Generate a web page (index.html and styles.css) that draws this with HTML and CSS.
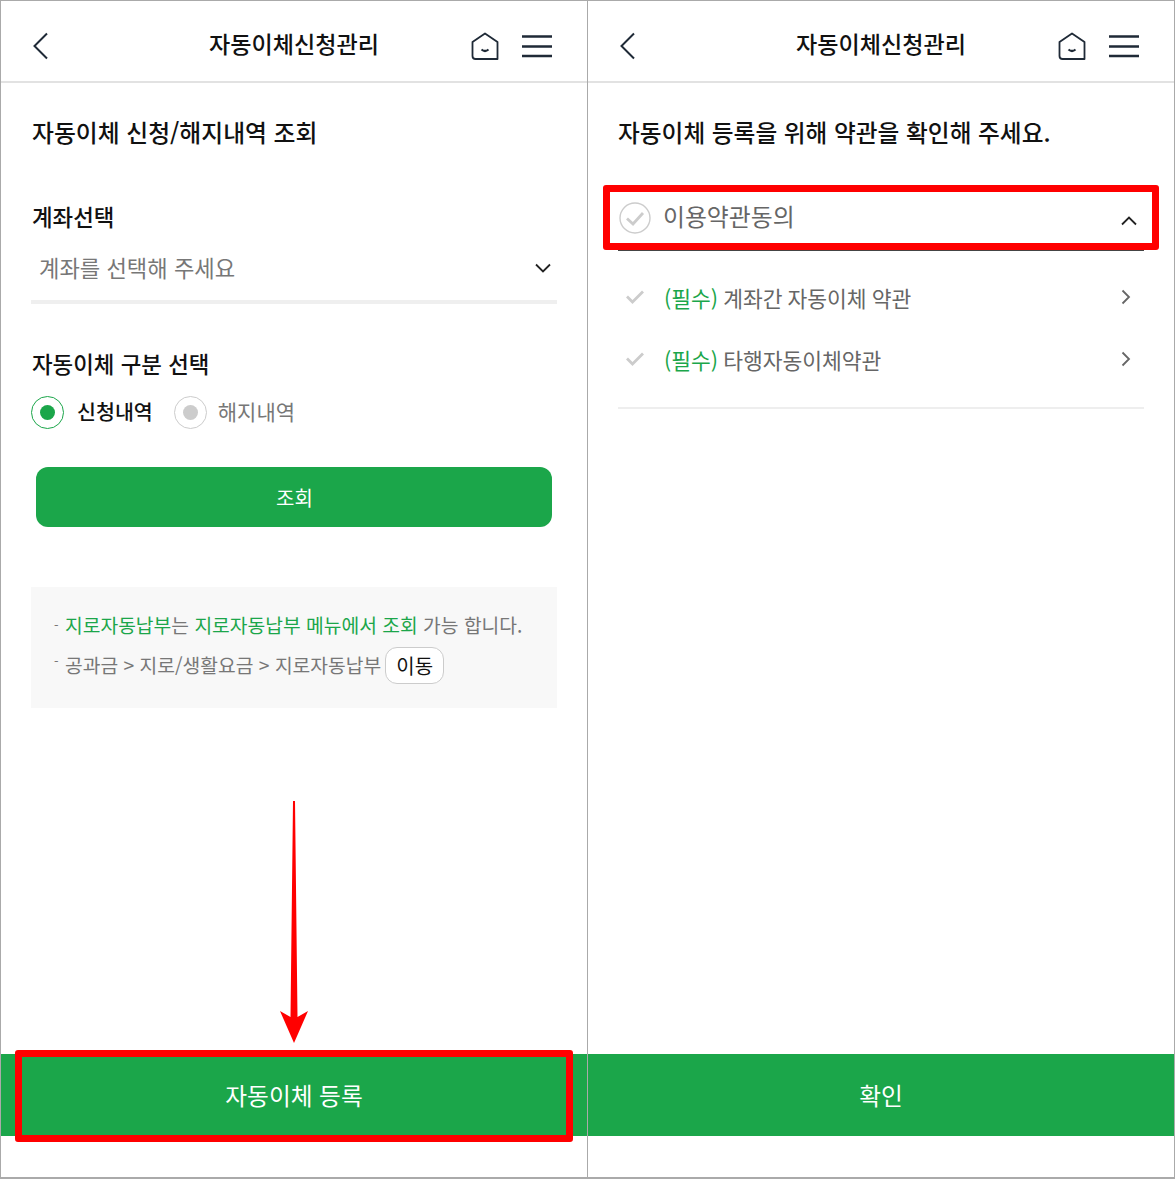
FILE: index.html
```html
<!DOCTYPE html>
<html lang="ko">
<head>
<meta charset="utf-8">
<title>자동이체신청관리</title>
<link rel="stylesheet" href="styles.css">
</head>
<body>
<div class="frame">
  <section class="panel panel-left">
    <header class="topbar">
      <svg class="back" width="18" height="28" viewBox="0 0 18 28"><path d="M15 1.5 2.5 14 15 26.5" fill="none" stroke="#1f2a37" stroke-width="2"/></svg>
      <h1 class="title">자동이체신청관리</h1>
      <div class="actions">
        <svg class="home" width="30" height="30" viewBox="0 0 30 30"><path d="M15 2.5 27.5 11V28H5.5Q2.5 28 2.5 25V11Z" fill="none" stroke="#1f2a37" stroke-width="1.8" stroke-linejoin="round"/><path d="M11.5 18.5Q15 21.5 18.5 18.5" fill="none" stroke="#1f2a37" stroke-width="2.2"/></svg>
        <svg class="menu" width="32" height="24" viewBox="0 0 32 24"><path d="M1 2.5H31M1 12.5H31M1 22H31" stroke="#1f2a37" stroke-width="2.4"/></svg>
      </div>
    </header>
    <div class="body">
      <h2 class="heading heading-left">자동이체 신청/해지내역 조회</h2>
      <h3 class="label label-account">계좌선택</h3>
      <div class="select">
        <span>계좌를 선택해 주세요</span>
        <svg class="select-chevron" width="18" height="12" viewBox="0 0 18 12"><path d="M2 2.5 9 9.5 16 2.5" fill="none" stroke="#222" stroke-width="1.8"/></svg>
      </div>
      <h3 class="label label-type">자동이체 구분 선택</h3>
      <div class="radios">
        <span class="radio radio-on"></span><span class="radio-text radio-text-on">신청내역</span>
        <span class="radio radio-off"></span><span class="radio-text">해지내역</span>
      </div>
      <div class="query">조회</div>
      <div class="notice">
        <p class="notice-line"><span class="dash">-</span><span><em>지로자동납부</em>는 <em>지로자동납부 메뉴에서 조회</em> 가능 합니다.</span></p>
        <p class="notice-line notice-path"><span class="dash">-</span><span class="path-text">공과금 &gt; 지로/생활요금 &gt; 지로자동납부</span><span class="move">이동</span></p>
      </div>
    </div>
    <div class="cta">자동이체 등록</div>
    <div class="mark mark-cta"></div>
    <svg class="arrow" width="32" height="244" viewBox="0 0 32 244"><path d="M15 0H17L19.5 216 30 210 16 242 2 210 12.5 216Z" fill="#f00"/></svg>
  </section>
  <section class="panel panel-right">
    <header class="topbar">
      <svg class="back" width="18" height="28" viewBox="0 0 18 28"><path d="M15 1.5 2.5 14 15 26.5" fill="none" stroke="#1f2a37" stroke-width="2"/></svg>
      <h1 class="title">자동이체신청관리</h1>
      <div class="actions">
        <svg class="home" width="30" height="30" viewBox="0 0 30 30"><path d="M15 2.5 27.5 11V28H5.5Q2.5 28 2.5 25V11Z" fill="none" stroke="#1f2a37" stroke-width="1.8" stroke-linejoin="round"/><path d="M11.5 18.5Q15 21.5 18.5 18.5" fill="none" stroke="#1f2a37" stroke-width="2.2"/></svg>
        <svg class="menu" width="32" height="24" viewBox="0 0 32 24"><path d="M1 2.5H31M1 12.5H31M1 22H31" stroke="#1f2a37" stroke-width="2.4"/></svg>
      </div>
    </header>
    <div class="body">
      <h2 class="heading">자동이체 등록을 위해 약관을 확인해 주세요.</h2>
      <div class="agree-head">
        <svg class="agree-check" width="32" height="32" viewBox="0 0 32 32"><circle cx="16" cy="16" r="15" fill="none" stroke="#ccc" stroke-width="1.4"/><path d="M8 16.5 14 22 24 11" fill="none" stroke="#ccc" stroke-width="2.8"/></svg>
        <span class="agree-title">이용약관동의</span>
        <svg class="agree-chevron" width="18" height="12" viewBox="0 0 18 12"><path d="M2 9.5 9 2.5 16 9.5" fill="none" stroke="#222" stroke-width="1.8"/></svg>
      </div>
      <ul class="terms">
        <li class="term">
          <svg width="20" height="16" viewBox="0 0 20 16"><path d="M2 7.5 7.5 13 18 2.5" fill="none" stroke="#ccc" stroke-width="2.8"/></svg>
          <span class="term-text"><em>(필수)</em> 계좌간 자동이체 약관</span>
          <svg width="12" height="18" viewBox="0 0 12 18"><path d="M2.5 2.5 9 9 2.5 15.5" fill="none" stroke="#666" stroke-width="1.8"/></svg>
        </li>
        <li class="term">
          <svg width="20" height="16" viewBox="0 0 20 16"><path d="M2 7.5 7.5 13 18 2.5" fill="none" stroke="#ccc" stroke-width="2.8"/></svg>
          <span class="term-text"><em>(필수)</em> 타행자동이체약관</span>
          <svg width="12" height="18" viewBox="0 0 12 18"><path d="M2.5 2.5 9 9 2.5 15.5" fill="none" stroke="#666" stroke-width="1.8"/></svg>
        </li>
      </ul>
    </div>
    <div class="cta">확인</div>
    <div class="mark mark-agree"></div>
  </section>
</div>
</body>
</html>
```
FILE: styles.css
```css
* { box-sizing: border-box; }
html, body { margin: 0; padding: 0; background: #fff; }
body { font-family: "Noto Sans CJK KR", "Noto Sans", sans-serif; color: #111; }
h1, h2, h3, p, ul { margin: 0; padding: 0; font-weight: inherit; font-size: inherit; }
em { font-style: normal; color: #1ba64a; }

.frame {
  width: 1175px; height: 1179px;
  display: grid; grid-template-columns: 587px 586px;
  border: 1px solid #aaa; border-bottom-width: 2px;
}
.panel { position: relative; display: flex; flex-direction: column; height: 100%; }
.panel-left { border-right: 1px solid #aaa; }

.topbar {
  flex: none; height: 82px; border-bottom: 2px solid #e2e2e2;
  display: grid; grid-template-columns: 1fr auto 1fr; align-items: center;
  padding: 14px 30px 4px;
}
.back { margin-left: 1px; }
.title {
  font-size: 23.1px; font-weight: 500; color: #111;
  line-height: 30px; margin-top: -6px; text-align: center;
}
.actions { display: flex; align-items: center; justify-content: flex-end; padding-right: 4px; gap: 21px; }
.home, .menu { flex: none; }

.body { flex: 1; padding: 0 30px; display: flex; flex-direction: column; min-height: 0; }
.heading { font-size: 23.7px; font-weight: 500; line-height: 32px; margin-top: 33px; color: #111; }
.heading-left { font-size: 23.8px; padding-left: 1px; }
.label { font-size: 22.4px; font-weight: 500; line-height: 30px; color: #111; padding-left: 1px; }
.label-account { margin-top: 53px; }
.label-type { margin-top: 44px; }

.select {
  height: 64px; margin-top: 9px; padding: 0 5px 6px 8px;
  border-bottom: 4px solid #efefef;
  display: flex; align-items: center; justify-content: space-between;
  font-size: 22.2px; color: #777;
}
.select span { line-height: 30px; }
.select-chevron { margin-top: 2px; }

.radios { display: flex; align-items: center; margin-top: 17px; height: 34px; }
.radio { flex: none; width: 33px; height: 33px; border-radius: 50%; display: flex; position: relative; }
.radio::after { content: ""; position: absolute; left: 8px; top: 8px; width: 15px; height: 15px; border-radius: 50%; }
.radio-on { border: 1.6px solid #1ba64a; }
.radio-on::after { background: #1ba64a; }
.radio-off { border: 1.6px solid #ccc; margin-left: 21px; }
.radio-off::after { background: #ccc; }
.radio-text { font-size: 21px; color: #777; margin-left: 11px; padding-bottom: 2px; }
.radio-text-on { font-size: 20.6px; color: #111; font-weight: 500; margin-left: 13px; }

.query {
  height: 60px; margin: 38px 5px 0 5px; border-radius: 12px; background: #1ba64a; padding-left: 1px;
  color: #fff; font-size: 20px; display: flex; align-items: center; justify-content: center;
}
.notice {
  margin-top: 60px; height: 121px; background: #f8f8f8; padding: 21px 22px 0 23px;
  font-size: 19.25px; color: #777;
}
.notice-line { display: flex; align-items: center; line-height: 34px; white-space: pre; }
.notice-path { margin-top: 5px; }
.path-text { padding-bottom: 2px; }
.dash { font-size: 13px; width: 11px; flex: none; position: relative; }
.notice-path .dash { top: -5px; }
.move {
  margin-left: 4px; width: 59px; height: 37px; border: 1.5px solid #ccc; border-radius: 12px;
  background: #fff; color: #111; font-size: 20px; display: flex; align-items: center; justify-content: center;
}

.cta {
  flex: none; height: 82px; margin-bottom: 41px; background: #1ba64a; color: #fff;
  font-size: 23.7px; display: flex; align-items: center; justify-content: center;
}

.agree-head {
  display: flex; align-items: center; height: 68px; margin-top: 35px;
  border-bottom: 1px solid #444; padding-bottom: 2px; padding-right: 6.5px;
}
.agree-title { flex: 1; font-size: 23.85px; color: #666; margin-left: 12px; }
.agree-check { flex: none; margin: 5px 0 0 1px; }
.agree-chevron { margin-top: 10px; }
.terms {
  list-style: none; height: 158px; padding-top: 15px; border-bottom: 2px solid #eee;
}
.term { display: flex; align-items: center; height: 62px; padding: 0 12px 0 7px; }
.term-text { flex: 1; font-size: 21.5px; color: #666; margin-left: 19px; white-space: pre; word-spacing: -1px; }

.mark { position: absolute; border: 7px solid #f00; border-radius: 3px; pointer-events: none; }
.mark-cta { left: 14px; top: 1049px; width: 558px; height: 92px; }
.mark-agree { left: 15px; top: 184px; width: 556px; height: 65px; }
.arrow { position: absolute; left: 277px; top: 800px; }
```
